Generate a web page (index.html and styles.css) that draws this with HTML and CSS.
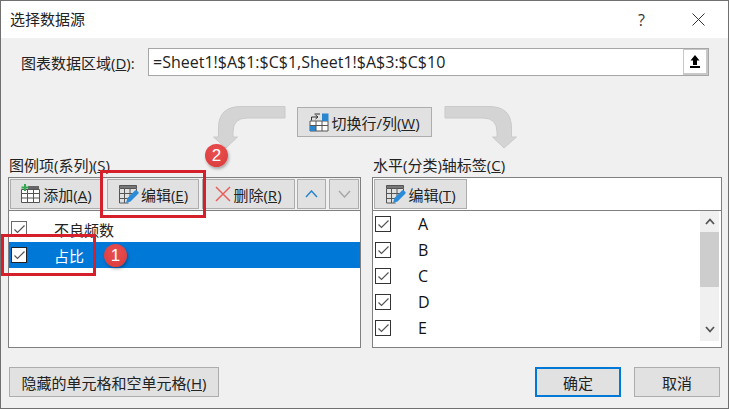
FILE: index.html
```html
<!DOCTYPE html>
<html lang="zh">
<head>
<meta charset="utf-8">
<title>选择数据源</title>
<link rel="stylesheet" href="styles.css">
</head>
<body>
<div class="window">
  <header class="titlebar">
    <span class="title">选择数据源</span>
    <span class="help">?</span>
    <svg class="close" width="13" height="13" viewBox="0 0 13 13"><path d="M.5.5l12 12M12.500.5l-12 12" stroke="#333" fill="none"/></svg>
  </header>

  <div class="range-row">
    <span class="range-label">图表数据区域(<u>D</u>):</span>
    <div class="range-box">
      <span class="range-text">=Sheet1!$A$1:$C$1,Sheet1!$A$3:$C$10</span>
      <span class="range-btn">
        <svg width="10" height="13" viewBox="0 0 10 13"><path d="M5 0l4.500 5.500H7V10H3V5.500H.5z" fill="#000"/><rect x="0" y="11" width="10" height="2" fill="#000"/></svg>
      </span>
    </div>
  </div>

  <div class="swap-row">
    <svg class="arrow" width="73" height="44" viewBox="0 0 73 44"><path d="M72 .5V12H34Q20 12 20 26V31H24.500L13 42 .5 31H5.500V22Q5.500 .5 28 .5Z"/></svg>
    <button class="btn swap-btn">
      <svg width="20" height="20" viewBox="0 0 20 20"><path d="M1 9h18v10H1z" fill="#fff" stroke="#555"/><path d="M13 1.500h6.500V9H13zM1 13h6v6H1z" fill="#2b86d0"/><path d="M7 9v10M13 9v10M1 13.500h18" stroke="#555" fill="none"/><path d="M2.500 8.500V5h6M6.500 3l2.500 2-2.500 2M11 2H5.500" stroke="#333" fill="none"/></svg>
      <span>切换行/列(<u>W</u>)</span>
    </button>
    <svg class="arrow flip" width="73" height="44" viewBox="0 0 73 44"><path d="M72 .5V12H34Q20 12 20 26V31H24.500L13 42 .5 31H5.500V22Q5.500 .5 28 .5Z"/></svg>
  </div>

  <div class="panels">
    <section class="panel-wrap">
      <div class="panel-label">图例项(系列)(<u>S</u>)</div>
      <div class="panel">
        <div class="toolbar">
          <button class="btn tool w92">
            <svg width="21" height="20" viewBox="0 0 21 20"><path d="M1.500 5.500h18v13h-18zM1.500 9.500h18M1.500 14h18M7.500 5.500v13M13.500 5.500v13" fill="#fff" stroke="#555"/><path d="M8 2h11v3H8z" fill="#666"/><path d="M5 0v7M1.500 3.500h7" stroke="#35a853" stroke-width="2" fill="none"/></svg>
            <span>添加(<u>A</u>)</span>
          </button>
          <button class="btn tool w92 ml5">
            <svg width="21" height="20" viewBox="0 0 21 20"><path d="M1.500 1.500h17v3h-17z" fill="#777" stroke="#555"/><path d="M1.500 5v14h9M18.500 5v4M1.500 9.500h14M1.500 14.500h10M6.500 5v14M12 5v9" fill="none" stroke="#555"/><path d="M8 19l1.500-5 7.500-7.500c1-1 2.500 .5 3.500 1.500 .5 .8 0 1.500-.5 2L12.500 17.500z" fill="#2b8bd8"/></svg>
            <span>编辑(<u>E</u>)</span>
          </button>
          <button class="btn tool w93 ml3">
            <svg width="16" height="16" viewBox="0 0 16 16"><path d="M1 1l14 14M15 1L1 15" stroke="#e8605c" stroke-width="1.500" fill="none"/></svg>
            <span>删除(<u>R</u>)</span>
          </button>
          <button class="btn tool w29 ml2">
            <svg width="13" height="8" viewBox="0 0 13 8"><path d="M1 7l5.500-6L12 7" stroke="#2b86c8" stroke-width="1.500" fill="none"/></svg>
          </button>
          <button class="btn tool w30 ml3">
            <svg width="13" height="8" viewBox="0 0 13 8"><path d="M1 1l5.500 6L12 1" stroke="#a8a8a8" stroke-width="1.500" fill="none"/></svg>
          </button>
        </div>
        <ul class="list series">
          <li class="item"><span class="check"><svg width="11" height="9" viewBox="0 0 11 9"><path d="M.5 4.500l3 3 7-7" stroke="#555" stroke-width="1.200" fill="none"/></svg></span><span class="item-text">不良频数</span></li>
          <li class="item selected"><span class="check"><svg width="11" height="9" viewBox="0 0 11 9"><path d="M.5 4.500l3 3 7-7" stroke="#555" stroke-width="1.200" fill="none"/></svg></span><span class="item-text">占比</span></li>
        </ul>
      </div>
    </section>

    <section class="panel-wrap">
      <div class="panel-label">水平(分类)轴标签(<u>C</u>)</div>
      <div class="panel">
        <div class="toolbar white">
          <button class="btn tool w93">
            <svg width="21" height="20" viewBox="0 0 21 20"><path d="M1.500 1.500h17v3h-17z" fill="#777" stroke="#555"/><path d="M1.500 5v14h9M18.500 5v4M1.500 9.500h14M1.500 14.500h10M6.500 5v14M12 5v9" fill="none" stroke="#555"/><path d="M8 19l1.500-5 7.500-7.500c1-1 2.500 .5 3.500 1.500 .5 .8 0 1.500-.5 2L12.500 17.500z" fill="#2b8bd8"/></svg>
            <span>编辑(<u>T</u>)</span>
          </button>
        </div>
        <div class="axis-body">
          <ul class="list axis">
            <li class="item"><span class="check"><svg width="11" height="9" viewBox="0 0 11 9"><path d="M.5 4.500l3 3 7-7" stroke="#555" stroke-width="1.200" fill="none"/></svg></span><span class="item-text">A</span></li>
            <li class="item"><span class="check"><svg width="11" height="9" viewBox="0 0 11 9"><path d="M.5 4.500l3 3 7-7" stroke="#555" stroke-width="1.200" fill="none"/></svg></span><span class="item-text">B</span></li>
            <li class="item"><span class="check"><svg width="11" height="9" viewBox="0 0 11 9"><path d="M.5 4.500l3 3 7-7" stroke="#555" stroke-width="1.200" fill="none"/></svg></span><span class="item-text">C</span></li>
            <li class="item"><span class="check"><svg width="11" height="9" viewBox="0 0 11 9"><path d="M.5 4.500l3 3 7-7" stroke="#555" stroke-width="1.200" fill="none"/></svg></span><span class="item-text">D</span></li>
            <li class="item"><span class="check"><svg width="11" height="9" viewBox="0 0 11 9"><path d="M.5 4.500l3 3 7-7" stroke="#555" stroke-width="1.200" fill="none"/></svg></span><span class="item-text">E</span></li>
          </ul>
          <div class="scrollbar">
            <svg class="sb-up" width="10" height="7" viewBox="0 0 10 7"><path d="M1 6l4-4.500L9 6" stroke="#555" stroke-width="1.800" fill="none"/></svg>
            <div class="sb-thumb"></div>
            <svg class="sb-down" width="10" height="7" viewBox="0 0 10 7"><path d="M1 1l4 4.500L9 1" stroke="#555" stroke-width="1.800" fill="none"/></svg>
          </div>
        </div>
      </div>
    </section>
  </div>

  <footer class="footer">
    <button class="btn hidden-btn"><span>隐藏的单元格和空单元格(<u>H</u>)</span></button>
    <div class="actions">
      <button class="btn action primary">确定</button>
      <button class="btn action">取消</button>
    </div>
  </footer>

  <div class="mark mark-one"></div>
  <div class="mark mark-two"></div>
  <div class="badge badge-one">1</div>
  <div class="badge badge-two">2</div>
</div>
</body>
</html>
```
FILE: styles.css
```css
* { box-sizing: border-box; }
html, body { margin: 0; padding: 0; }
body {
  width: 729px;
  height: 409px;
  overflow: hidden;
  font-family: "Open Sans", "Noto Sans CJK SC", sans-serif;
  font-size: 15px;
  color: #222;
}
.window {
  position: relative;
  width: 729px;
  height: 409px;
  border: 1px solid #707070;
  background: #f0f0f0;
}
.titlebar {
  height: 37px;
  background: #fff;
  display: flex;
  align-items: center;
  padding-left: 9px;
}
.title { font-size: 15px; line-height: 37px; }
.help { margin-left: auto; font-size: 16px; color: #333; }
.close { margin-left: 47px; margin-right: 23px; }

.range-row {
  display: flex;
  align-items: center;
  margin-top: 10px;
  padding-left: 20px;
  height: 28px;
}
.range-label { width: 127px; font-size: 15px; white-space: nowrap; }
.range-box {
  width: 561px;
  height: 28px;
  background: #fff;
  border: 1px solid #a6a6a6;
  display: flex;
  align-items: center;
  justify-content: space-between;
  padding-left: 4px;
}
.range-text { font-size: 16px; }
.range-btn {
  width: 25px;
  height: 26px;
  border-style: solid;
  border-color: #c8c8c8;
  border-width: 1px 2px 2px 1px;
  background: #fff;
  display: flex;
  align-items: center;
  justify-content: center;
}

.swap-row {
  display: flex;
  height: 50px;
  margin-top: 30px;
  padding-left: 212px;
}
.arrow { fill: #d4d4d4; stroke: #cacaca; overflow: visible; flex: none; }
.flip { transform: scaleX(-1); margin-left: 12px; }
.swap-btn {
  width: 135px;
  height: 30px;
  margin-top: 1px;
  margin-left: 11px;
}

.btn {
  display: inline-flex;
  align-items: center;
  justify-content: center;
  gap: 2px;
  padding: 0;
  border: 1px solid #adadad;
  background: #e1e1e1;
  color: #222;
  font-family: inherit;
  font-size: 15px;
  white-space: nowrap;
}

.panels {
  display: grid;
  grid-template-columns: 353px 350px;
  column-gap: 11px;
  padding-left: 7px;
}
.panel-label { height: 21px; line-height: 19px; font-size: 15px; padding-left: 1px; white-space: nowrap; }
.panel {
  height: 171px;
  border: 1px solid #808080;
  background: #fff;
  display: flex;
  flex-direction: column;
}
.toolbar {
  height: 33px;
  flex: none;
  display: flex;
  padding: 1px;
  background: #f0f0f0;
  border-bottom: 1px solid #808080;
}
.toolbar.white { background: #fff; }
.tool { height: 30px; }
.w92 { width: 92px; }
.w93 { width: 93px; }
.w29 { width: 29px; }
.w30 { width: 30px; }
.ml2 { margin-left: 2px; }
.ml3 { margin-left: 3px; }
.ml5 { margin-left: 5px; }

.list { list-style: none; margin: 0; padding: 0; flex: 1; }
.series { padding-top: 5px; }
.item {
  height: 26px;
  display: flex;
  align-items: center;
  padding-left: 2px;
}
.item-text { margin-left: 27px; font-size: 15px; color: #222; }
.check {
  width: 16px;
  height: 16px;
  flex: none;
  border: 1px solid #333;
  background: #fff;
  display: flex;
  align-items: center;
  justify-content: center;
}
.series .check { border-color: #6a6a6a; }
.selected { background: #0078d7; }
.selected .item-text { color: #fff; }
.selected .check { border-color: #222; }

.axis-body { flex: 1; display: flex; min-height: 0; }
.axis .item-text { font-size: 16px; color: #111; }
.scrollbar {
  width: 19px;
  height: 130px;
  margin-right: 2px;
  background: #f0f0f0;
  display: flex;
  flex-direction: column;
  align-items: center;
}
.sb-up { margin-top: 7px; flex: none; }
.sb-thumb { width: 100%; height: 55px; margin-top: 7px; background: #cdcdcd; }
.sb-down { margin-top: 39px; flex: none; }

.footer {
  display: flex;
  justify-content: space-between;
  margin-top: 19px;
  padding: 0 8px;
}
.hidden-btn { width: 210px; height: 30px; }
.actions { display: flex; gap: 13px; }
.action { width: 86px; height: 30px; }
.primary { border: 2px solid #0078d7; }

.mark {
  position: absolute;
  border: 3px solid #d5202c;
}
.mark-one { left: 0; top: 233px; width: 95px; height: 42px; }
.mark-two { left: 99px; top: 169px; width: 106px; height: 48px; }
.badge {
  position: absolute;
  width: 23px;
  height: 23px;
  border-radius: 50%;
  background: radial-gradient(circle at 50% 35%, #ea4f4f, #d93a3a);
  box-shadow: 1px 2px 3px rgba(0,0,0,.3);
  color: #fff;
  font-size: 17px;
  font-family: "Liberation Sans", sans-serif;
  display: flex;
  align-items: center;
  justify-content: center;
}
.badge-one { left: 103px; top: 243px; }
.badge-two { left: 204px; top: 143px; }
```
